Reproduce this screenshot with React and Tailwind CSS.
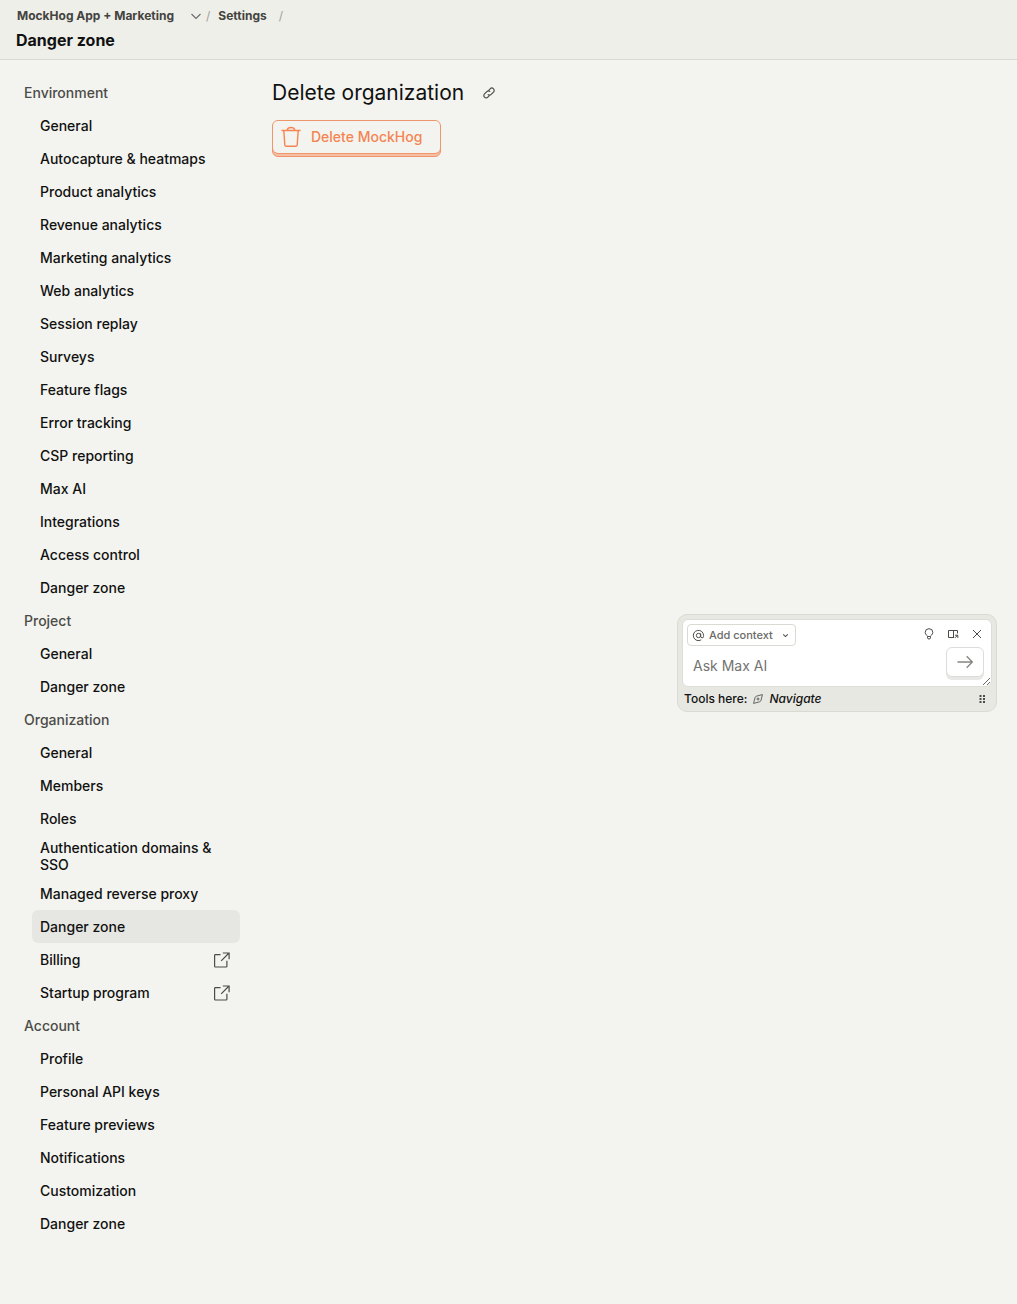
import React from "react";

const sections = [
  {
    title: "Environment",
    items: [
      "General",
      "Autocapture & heatmaps",
      "Product analytics",
      "Revenue analytics",
      "Marketing analytics",
      "Web analytics",
      "Session replay",
      "Surveys",
      "Feature flags",
      "Error tracking",
      "CSP reporting",
      "Max AI",
      "Integrations",
      "Access control",
      "Danger zone",
    ],
  },
  { title: "Project", items: ["General", "Danger zone"] },
  {
    title: "Organization",
    active: "Danger zone",
    external: ["Billing", "Startup program"],
    items: [
      "General",
      "Members",
      "Roles",
      "Authentication domains & SSO",
      "Managed reverse proxy",
      "Danger zone",
      "Billing",
      "Startup program",
    ],
  },
  {
    title: "Account",
    items: [
      "Profile",
      "Personal API keys",
      "Feature previews",
      "Notifications",
      "Customization",
      "Danger zone",
    ],
  },
];

function Icon({ className, children, strokeWidth = 1.5, viewBox = "0 0 24 24" }) {
  return (
    <svg
      aria-hidden="true"
      viewBox={viewBox}
      fill="none"
      stroke="currentColor"
      strokeWidth={strokeWidth}
      className={className}
    >
      {children}
    </svg>
  );
}

function ExternalIcon() {
  return (
    <Icon className="size-5 shrink-0 text-[#4b4b48]" viewBox="0 0 20 20" strokeWidth={1.2}>
      <path d="M8.5 4.7H3.4a.8.8 0 0 0-.8.8v10.7c0 .4.4.8.8.8h10.7c.4 0 .8-.4.8-.8v-5.4" />
      <path d="M10.8 3h6.3v6.2M17 3l-7.8 7.9" />
    </Icon>
  );
}

function Header() {
  return (
    <header className="flex h-[60px] flex-col border-b border-[#d9dad4] bg-[#eeefe9] px-4 pt-2">
      <nav aria-label="Breadcrumb" className="flex h-4 items-center text-[12px] leading-4 font-bold text-[#434340]">
        <button type="button" className="flex items-center gap-4 pl-px">
          MockHog App + Marketing
          <Icon className="size-3 text-[#6b6b67]" viewBox="0 0 12 12" strokeWidth={1.1}>
            <path d="m1.5 4 4.5 4.5L10.500 4" />
          </Icon>
        </button>
        <span className="pl-1 font-normal text-[#a0a09b]">/</span>
        <a href="#settings" className="px-2">Settings</a>
        <span className="pl-1 font-normal text-[#a0a09b]">/</span>
      </nav>
      <h1 className="mt-1 text-[16px] leading-6 font-bold text-[#111]">Danger zone</h1>
    </header>
  );
}

function Sidebar() {
  return (
    <nav aria-label="Settings" className="w-56 shrink-0 text-[14px] leading-[17px] font-medium">
      {sections.map((section) => (
        <section key={section.title}>
          <h2 className="flex h-[33px] items-center px-2 text-[#4b4b48]">{section.title}</h2>
          <ul className="pl-4">
            {section.items.map((item) => (
              <li key={item}>
                <a
                  href="#section"
                  aria-current={section.active === item ? "page" : undefined}
                  className={
                    section.active === item
                      ? "flex min-h-[33px] items-center justify-between rounded-md bg-[#e6e7e2] px-2 py-1 text-[#111]"
                      : "flex min-h-[33px] items-center justify-between rounded-md px-2 py-1 text-[#111]"
                  }
                >
                  {item}
                  {section.external?.includes(item) && <ExternalIcon />}
                </a>
              </li>
            ))}
          </ul>
        </section>
      ))}
    </nav>
  );
}

function Assistant() {
  return (
    <aside className="fixed top-[614px] right-5 w-80 rounded-[10px] border border-[#d9dad2] bg-[#e7e8e2] px-1 pt-1">
      <div className="relative rounded-md border border-[#dddeD8] bg-white">
        <div className="flex items-start justify-between pt-1 pr-2 pl-1">
          <button
            type="button"
            className="flex h-[22px] items-center gap-1 rounded border border-[#d9dad4] px-1 text-[11px] font-medium text-[#6b6b67]"
          >
            <Icon className="size-[13px] text-[#4b4b48]" strokeWidth={1.8}>
              <circle cx="12" cy="12" r="4" />
              <path d="M16 8v5.5a2.7 2.7 0 0 0 5.4 0V12A9.5 9.5 0 1 0 17 20" />
            </Icon>
            Add context
            <Icon className="ml-[3px] size-[11px] text-[#4b4b48]" strokeWidth={2.2}>
              <path d="m7 9.5 5 5 5-5" />
            </Icon>
          </button>
          <div className="flex h-5 items-center gap-3 text-[#4b4b48]">
            <button type="button" aria-label="Suggestions">
              <Icon className="size-3" viewBox="0 0 12 12" strokeWidth={1}>
                <path d="M4.500 8.500C4.500 7.200 2.200 6.900 2.200 4.500a3.800 3.800 0 0 1 7.600 0c0 2.400-2.300 2.700-2.300 4zM4.500 8.500v1.300q0 1.200 1.500 1.200t1.500-1.200V8.500" />
              </Icon>
            </button>
            <button type="button" aria-label="Open in side panel">
              <Icon className="size-3" viewBox="0 0 12 12" strokeWidth={1}>
                <path d="M6.500 2.500v7M10.500 5.500v-3h-9v7H7" />
                <path d="M8 9.800l2.500-2.500M8 7.200h2.800v2.700" />
              </Icon>
            </button>
            <button type="button" aria-label="Close">
              <Icon className="size-3" viewBox="0 0 12 12" strokeWidth={1}>
                <path d="m2 2 8 8M10 2l-8 8" />
              </Icon>
            </button>
          </div>
        </div>
        <textarea
          aria-label="Ask Max AI"
          placeholder="Ask Max AI"
          className="block h-10 w-full resize overflow-hidden bg-transparent pt-[9px] pr-12 pl-[10px] text-[14px] leading-[22px] placeholder:text-[#73736f] focus:outline-none"
        />
        <button
          type="button"
          aria-label="Send"
          className="absolute right-[7px] bottom-[9px] flex h-[30px] w-[38px] items-center justify-center rounded-md border border-[#dcdcda] bg-white text-[#858582] shadow-[0_3px_0_#e8e8e6]"
        >
          <Icon className="size-5" strokeWidth={1.6}>
            <path d="M3 12h17.5M14 5.2l6.800 6.800-6.800 6.800" />
          </Icon>
        </button>
      </div>
      <div className="flex h-6 items-center justify-between pr-1 pl-[2px] text-[12px] font-medium text-[#111]">
        <span className="flex items-center gap-[6px]">
          Tools here:
          <Icon className="size-[10px] text-[#4b4b48]" viewBox="0 0 12 12" strokeWidth={1}>
            <path d="M11.3.7 4.2 2.6Q2.8 3 2.4 4.4L.7 11.3l7.1-1.9q1.4-.4 1.8-1.8z" />
            <circle cx="6" cy="6" r="1.2" />
          </Icon>
          <i>Navigate</i>
        </span>
        <svg viewBox="0 0 12 12" className="size-3 text-[#4b4b48]" fill="currentColor" aria-hidden="true">
          <path d="M3.500 2h2v2h-2zm3.500 0h2v2H7zM3.500 5h2v2h-2zM7 5h2v2H7zM3.500 8h2v2h-2zM7 8h2v2H7z" />
        </svg>
      </div>
    </aside>
  );
}

export default function App() {
  return (
    <div className="min-h-screen bg-[#f3f4ef] font-['Inter',sans-serif] text-[#111]">
      <Header />
      <div className="flex gap-8 p-4">
        <Sidebar />
        <main className="min-w-0 flex-1">
          <div className="flex h-[34px] items-center gap-[18px]">
            <h2 className="text-[21px] leading-8">Delete organization</h2>
            <a href="#organization-delete" aria-label="Link to this section" className="text-[#4b4b48]">
              <Icon className="size-[14px]" strokeWidth={2}>
                <path d="M10 14.5a4 4 0 0 0 5.7 0l4-4a4 4 0 0 0-5.7-5.7l-3 3" />
                <path d="M14 9.5a4 4 0 0 0-5.7 0l-4 4a4 4 0 0 0 5.7 5.7l3-3" />
              </Icon>
            </a>
          </div>
          <button
            type="button"
            className="mt-[10px] flex h-[37px] rounded-md border border-[#ee956c] bg-[#f6bea2] text-[14px] leading-4 font-medium text-[#f58452]"
          >
            <span className="flex h-8 items-center gap-2 rounded-[5px] bg-[#f3f4ef] pr-[18px] pl-[6px] shadow-[0_1px_0_#ee956c]">
              <Icon className="size-6" strokeWidth={1.4}>
                <path d="M2.500 5.500h19M4.800 5.500l1 14.300c.1.900.7 1.500 1.600 1.500h9.200c.9 0 1.500-.6 1.600-1.500l1-14.300M8.300 5.500a3.700 3 0 0 1 7.400 0" />
              </Icon>
              Delete MockHog
            </span>
          </button>
        </main>
      </div>
      <Assistant />
    </div>
  );
}
